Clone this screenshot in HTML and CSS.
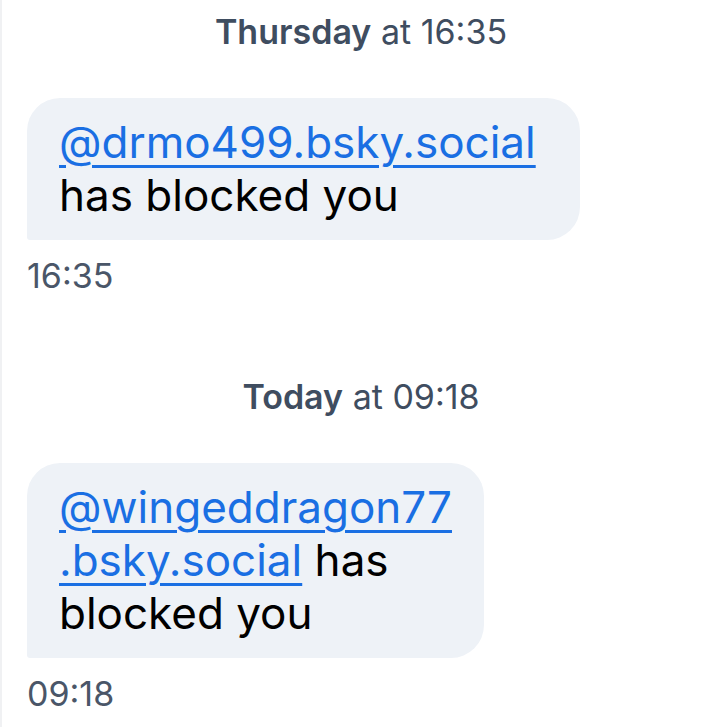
FILE: index.html
```html
<!DOCTYPE html>
<html lang="en">
<head>
<meta charset="utf-8">
<title>Messages</title>
<link rel="stylesheet" href="styles.css">
</head>
<body>
<main class="thread">
  <section class="group">
    <div class="day"><strong>Thursday</strong> at 16:35</div>
    <div class="bubble">
      <a class="mention" href="#">@drmo499.bsky.social</a> has blocked you
    </div>
    <div class="time">16:35</div>
  </section>
  <section class="group group-next">
    <div class="day"><strong>Today</strong> at 09:18</div>
    <div class="bubble">
      <a class="mention" href="#">@wingeddragon77<br>.bsky.social</a> has<br>blocked you
    </div>
    <div class="time">09:18</div>
  </section>
</main>
</body>
</html>
```
FILE: styles.css
```css
html, body {
  margin: 0;
  padding: 0;
  background: #ffffff;
}

body {
  font-family: "Inter", "Roboto", "Noto Sans", sans-serif;
  color: #000000;
  width: 720px;
  height: 727px;
  overflow: hidden;
}

.thread {
  display: flex;
  flex-direction: column;
  min-height: 727px;
  border-left: 2px solid #f0f1f3;
  padding: 12px 0 0 25px;
  box-sizing: border-box;
}

.group {
  display: flex;
  flex-direction: column;
  align-items: flex-start;
}

.group-next {
  margin-top: 81px;
}

.day {
  align-self: stretch;
  text-align: center;
  margin-left: -25px;
  font-size: 34px;
  line-height: 40px;
  color: #3f4d60;
}

.day strong {
  font-weight: 600;
}

.bubble {
  margin-top: 46px;
  max-width: 553px;
  box-sizing: border-box;
  padding: 18px 32px;
  background: #eef2f7;
  border-radius: 33px 33px 33px 3px;
  font-size: 44px;
  line-height: 53px;
}

.mention {
  color: #1a6fe3;
  text-decoration: underline;
  text-decoration-thickness: 2.5px;
  text-underline-offset: 7px;
}

.time {
  margin-top: 16px;
  font-size: 34px;
  line-height: 40px;
  color: #4a5668;
}
```
